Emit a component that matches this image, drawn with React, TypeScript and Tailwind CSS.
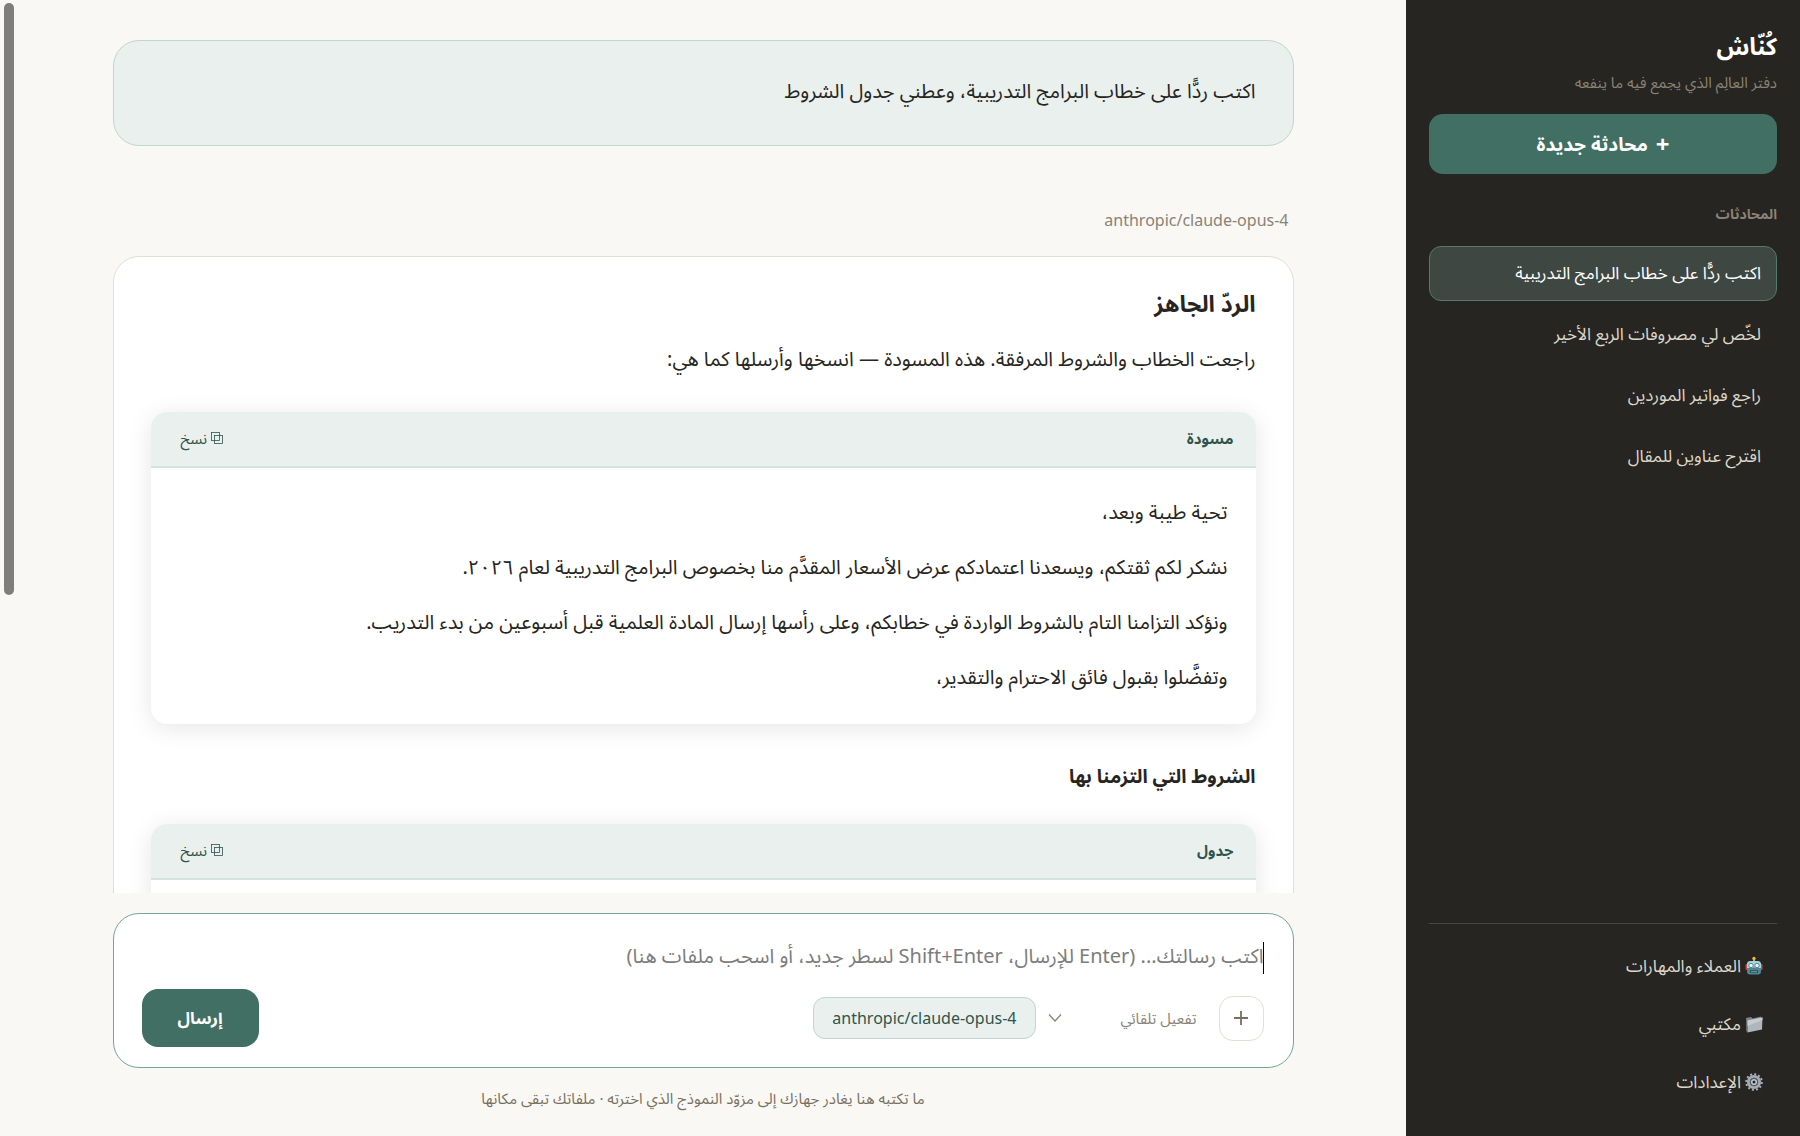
import React from 'react';

const conversations = [
  'اكتب ردًّا على خطاب البرامج التدريبية',
  'لخّص لي مصروفات الربع الأخير',
  'راجع فواتير الموردين',
  'اقترح عناوين للمقال',
];

const draftLines = [
  'تحية طيبة وبعد،',
  'نشكر لكم ثقتكم، ويسعدنا اعتمادكم عرض الأسعار المقدَّم منا بخصوص البرامج التدريبية لعام ٢٠٢٦.',
  'ونؤكد التزامنا التام بالشروط الواردة في خطابكم، وعلى رأسها إرسال المادة العلمية قبل أسبوعين من بدء التدريب.',
  'وتفضَّلوا بقبول فائق الاحترام والتقدير،',
];

const RobotIcon: React.FC = () => (
  <svg width="18" height="20" viewBox="0 0 18 20" aria-hidden="true">
    <rect x="8" y="3" width="2" height="3" fill="#c9a45c" />
    <circle cx="9" cy="2.4" r="1.7" fill="#e9b949" />
    <rect x="0.5" y="8" width="3" height="6" rx="1.2" fill="#c94b3f" />
    <rect x="14.5" y="8" width="3" height="6" rx="1.2" fill="#c94b3f" />
    <path d="M2 8.5Q2 5 5.5 5H12.5Q16 5 16 8.5V15.5Q16 18.5 13 18.5H5Q2 18.5 2 15.5Z" fill="#4b8794" />
    <path d="M2 8.5Q2 5 5.5 5H12.5Q16 5 16 8.5V12H2Z" fill="#a9d3d8" />
    <circle cx="6" cy="9.5" r="2.2" fill="#e8f8fa" stroke="#3f8fa0" />
    <circle cx="12" cy="9.5" r="2.2" fill="#e8f8fa" stroke="#3f8fa0" />
    <path d="M9 10.5L10.2 12.8H7.8Z" fill="#d0463a" />
    <rect x="5" y="14.3" width="8" height="2.2" rx="0.6" fill="#26424a" />
    <path d="M6.5 15.4H11.5" stroke="#d8e6e8" strokeDasharray="1 1" />
  </svg>
);

const FolderIcon: React.FC = () => (
  <svg width="18" height="20" viewBox="0 0 18 20" aria-hidden="true">
    <path d="M1 4L6 3L7.5 4.5L16 2.5V5L1 9Z" fill="#7c848c" />
    <path d="M1 4V17L2.5 18.5V7Z" fill="#5f676e" />
    <path d="M2.5 6.5L17.5 3.5L17 15.5L2.5 18.5Z" fill="#b0b6bc" />
    <path d="M2.5 6.5L17.5 3.5L17.4 6L2.5 12Z" fill="#c6cbd0" />
  </svg>
);

const GearIcon: React.FC = () => (
  <svg width="18" height="20" viewBox="0 0 18 20" fill="none" aria-hidden="true">
    <circle cx="9" cy="10" r="7.8" stroke="#aab1bb" strokeWidth="2" strokeDasharray="2 2.08" />
    <circle cx="9" cy="10" r="5.5" stroke="#a3abb6" strokeWidth="3.2" />
    <circle cx="9" cy="10" r="3.9" stroke="#5d6570" strokeWidth="1" />
    <circle cx="9" cy="10" r="2.3" stroke="#c3c9d1" strokeWidth="1.6" />
  </svg>
);

const links = [
  { label: 'العملاء والمهارات', Icon: RobotIcon },
  { label: 'مكتبي', Icon: FolderIcon },
  { label: 'الإعدادات', Icon: GearIcon },
];

const CopyButton: React.FC = () => (
  <button className="flex items-center gap-1 text-[15px] text-[#2f5449]">
    <svg width="12" height="12" viewBox="0 0 12 12" fill="none" stroke="currentColor" strokeWidth="0.8" aria-hidden="true">
      <rect x="0.5" y="0.5" width="8" height="8" />
      <rect x="3.5" y="3.5" width="8" height="8" />
    </svg>
    نسخ
  </button>
);

const Artifact: React.FC<{ title: string; children?: React.ReactNode }> = ({ title, children }) => (
  <section className="overflow-hidden rounded-2xl bg-white shadow-[0_4px_24px_rgba(0,0,0,0.10)]">
    <header className="flex h-14 items-center justify-between border-b-2 border-[#d3e3de] bg-[#eaf0ee] pr-[22px] pb-0.5 pl-[30px]">
      <h4 className="text-[15px] font-bold text-[#2f5449]">{title}</h4>
      <CopyButton />
    </header>
    <div className="min-h-20 px-7 pt-4 pb-5">{children}</div>
  </section>
);

const Sidebar: React.FC = () => (
  <aside className="flex w-[394px] shrink-0 flex-col bg-[#262521] px-[23px] pt-6 pb-6">
    <h1 className="text-2xl leading-[44px] font-bold text-white">كُنّاش</h1>
    <p className="text-[15px] leading-7 text-[#8a8375]">دفتر العالِم الذي يجمع فيه ما ينفعه</p>
    <button className="mt-[18px] flex h-[60px] shrink-0 items-center justify-center gap-2 rounded-[14px] bg-[#426f63] text-[19px] font-bold text-white">
      <span className="text-2xl">+</span>
      محادثة جديدة
    </button>
    <h2 className="mt-6 text-sm leading-8 font-bold text-[#8a8375]">المحادثات</h2>
    <nav className="mt-4 flex flex-col gap-1.5">
      {conversations.map((title, i) => (
        <button
          key={title}
          className={
            i === 0
              ? 'h-[55px] rounded-xl border border-[#56796e] bg-[#3e4742] px-[15px] pb-0.5 text-right text-[17px] text-white'
              : 'h-[55px] rounded-xl border border-transparent px-[15px] pb-0.5 text-right text-[17px] text-[#ddd8cc]'
          }
        >
          {title}
        </button>
      ))}
    </nav>
    <nav className="mt-auto flex flex-col border-t border-[#474641] pt-3.5">
      {links.map(({ label, Icon }) => (
        <a key={label} href="#" className="flex h-[58px] items-center gap-1 px-[14px] pb-0.5 text-[17px] text-[#ddd8cc]">
          <Icon />
          {label}
        </a>
      ))}
    </nav>
  </aside>
);

const Composer: React.FC = () => (
  <form className="relative rounded-[26px] border border-[#77a597] bg-white pt-[18px] pr-[29px] pb-5 pl-7">
    <textarea
      aria-label="رسالتك"
      rows={1}
      className="block h-12 w-full resize-none text-xl leading-[48px] outline-none placeholder:text-[#7c7c7c]"
      placeholder="اكتب رسالتك... (Enter للإرسال، Shift+Enter لسطر جديد، أو اسحب ملفات هنا)"
    />
    <span className="absolute top-7 right-[29px] h-8 w-px bg-black" />
    <div className="mt-[9px] flex items-center">
      <button type="button" aria-label="إرفاق ملف" className="flex size-[45px] items-center justify-center rounded-[14px] border border-[#e4dfd5] text-[#77705f]">
        <svg width="16" height="16" viewBox="0 0 16 16" fill="none" stroke="currentColor" strokeWidth="1.8" aria-hidden="true">
          <path d="M8 1V15M1 8H15" />
        </svg>
      </button>
      <select aria-label="وضع التفعيل" className="mr-[22px] w-[135px] appearance-none bg-transparent text-[15px] text-[#8a8375]">
        <option>تفعيل تلقائي</option>
      </select>
      <svg width="14" height="10" viewBox="0 0 14 10" fill="none" stroke="#8a8375" strokeWidth="1.3" aria-hidden="true">
        <path d="M1 1.5L7 8L13 1.5" />
      </svg>
      <button type="button" dir="ltr" className="mr-3 h-[42px] rounded-xl border border-[#bcd8cf] bg-[#eaf0ee] px-[18px] text-base text-[#2f5449]">
        anthropic/claude-opus-4
      </button>
      <button className="mr-auto h-[58px] w-[117px] rounded-2xl bg-[#426f63] text-[17px] font-bold text-white">إرسال</button>
    </div>
  </form>
);

const App: React.FC = () => {
  return (
    <div dir="rtl" className="flex h-screen overflow-hidden bg-[#f9f8f4] font-['Noto_Sans','Noto_Sans_Arabic','DejaVu_Sans',sans-serif] text-[#262521]">
      <Sidebar />
      <main className="relative flex min-w-0 flex-1 flex-col">
        <span className="absolute top-[3px] left-1 h-[592px] w-2.5 rounded-full bg-[#7f7e7b]" />
        <div className="min-h-0 flex-1 overflow-hidden px-8">
          <div className="mx-auto max-w-[1181px] pt-10">
            <div className="rounded-[26px] border border-[#bcd8cf] bg-[#eaf0ee] px-[37px] pt-[30px] pb-[34px] text-xl leading-10">
              اكتب ردًّا على خطاب البرامج التدريبية، وعطني جدول الشروط
            </div>
            <p className="mt-[58px] px-[5px] text-right text-base leading-8 text-[#8a8375]">
              <span dir="ltr">anthropic/claude-opus-4</span>
            </p>
            <article className="mt-5 rounded-[26px] border border-[#e4dfd5] bg-white px-[37px] pt-[26px]">
              <h3 className="text-[23px] leading-10 font-bold">الردّ الجاهز</h3>
              <p className="mt-4 text-xl leading-10">راجعت الخطاب والشروط المرفقة. هذه المسودة — انسخها وأرسلها كما هي:</p>
              <div className="mt-[33px]">
                <Artifact title="مسودة">
                  {draftLines.map((line) => (
                    <p key={line} className="text-xl leading-[55px]">
                      {line}
                    </p>
                  ))}
                </Artifact>
              </div>
              <h3 className="mt-8 mb-7 text-[19px] leading-10 font-bold">الشروط التي التزمنا بها</h3>
              <Artifact title="جدول" />
            </article>
          </div>
        </div>
        <div className="px-8 pt-5 pb-5">
          <div className="mx-auto max-w-[1181px]">
            <Composer />
            <p className="mt-3 text-center text-[15px] leading-9 text-[#77705f]">
              ما تكتبه هنا يغادر جهازك إلى مزوّد النموذج الذي اخترته · ملفاتك تبقى مكانها
            </p>
          </div>
        </div>
      </main>
    </div>
  );
};

export default App;
